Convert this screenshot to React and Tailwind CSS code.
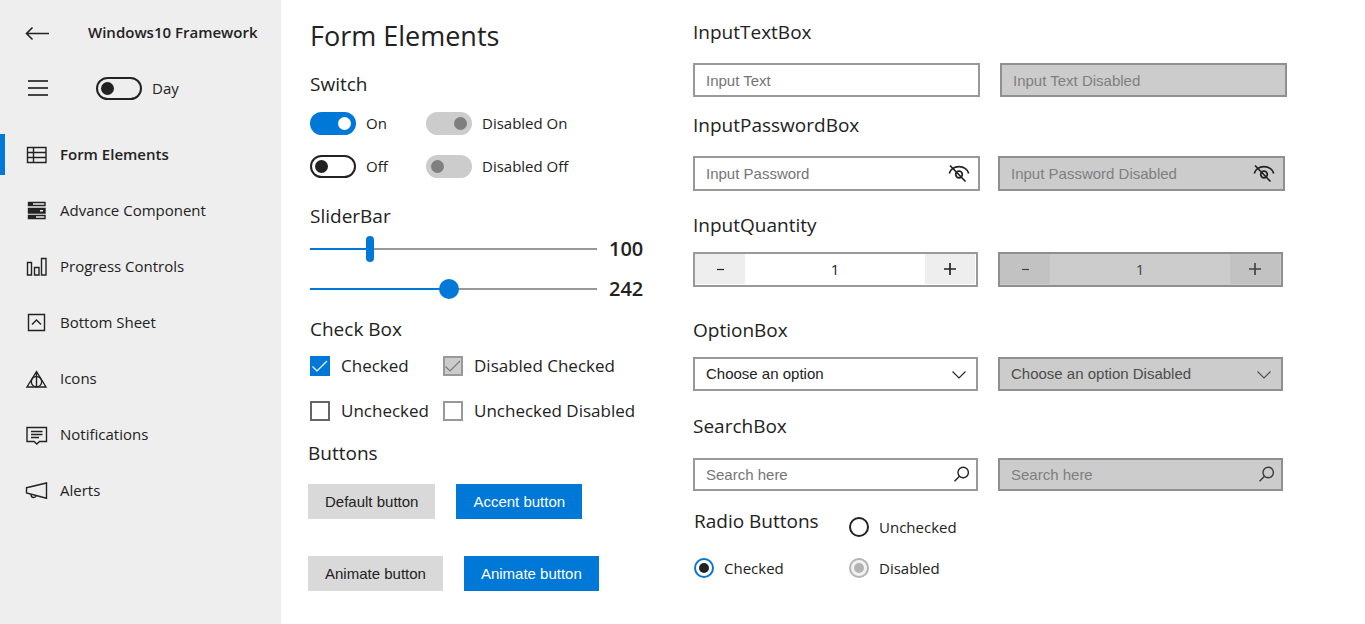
import { useState } from "react";

const NAV = [
  { label: "Form Elements", icon: "form", active: true },
  { label: "Advance Component", icon: "advance" },
  { label: "Progress Controls", icon: "progress" },
  { label: "Bottom Sheet", icon: "sheet" },
  { label: "Icons", icon: "icons" },
  { label: "Notifications", icon: "notifications" },
  { label: "Alerts", icon: "alerts" },
];

const NAV_ICONS = {
  form: (
    <path d="M2.500 5.500h18.500v15H2.500zM2.500 10.500h18.500M2.500 15.500h18.500M8.500 5.500v15" />
  ),
  advance: (
    <>
      <path d="M3.500 4.500h16.500v3H3.500zM3.500 10.500h16.500v4.500H3.500zM3.500 17.500h16.500v3H3.500z" />
      <path d="M3 4h5v4H3zM3 10h17v5H3zM3 17h8v4H3z" fill="currentColor" stroke="none" />
      <path d="M15 12h3v1.500h-3z" fill="#eeeeee" stroke="none" />
    </>
  ),
  progress: <path d="M2.500 8.500h4v12.500h-4zM9.500 13.500h4.500v7.500H9.500zM16.500 4.500h4.500v16.500h-4.500z" />,
  sheet: <path d="M3.500 4.500h16v16h-16zM7 14.500l4.500-4.500 4.500 4.500" />,
  icons: (
    <>
      <path d="M11.500 5.500L21 21H2zM11.500 5.500V21" />
      <circle cx="11.500" cy="15.700" r="5.200" />
    </>
  ),
  notifications: (
    <path d="M2 5.500h19.500v14h-7l-2.700 2.500-2.700-2.500H2zM6 9.500h11.500M6 12.500h11.500M6 15.500h8" />
  ),
  alerts: (
    <path d="M1.500 9.700L21.500 5v15.300L1.500 15zM6 16.500c0 2 1 3 2.500 3s2.500-.7 2.700-1.800" />
  ),
};

function NavIcon({ name }) {
  return (
    <svg viewBox="0 0 24 25" className="h-[25px] w-6 shrink-0" fill="none" stroke="currentColor" strokeWidth="1.400" aria-hidden="true">
      {NAV_ICONS[name]}
    </svg>
  );
}

function Heading({ children, className = "" }) {
  return <h2 className={`h-7 text-[19px] leading-7 ${className}`}>{children}</h2>;
}

function Switch({ label, checked, disabled }) {
  return (
    <label className="flex h-6 items-center gap-2.5 text-[15px] leading-6">
      <input
        type="checkbox"
        role="switch"
        defaultChecked={checked}
        disabled={disabled}
        className="flex h-[23px] w-[46px] shrink-0 appearance-none items-center rounded-full border-2 border-[#222] before:ml-[3px] before:size-[13px] before:rounded-full before:bg-[#222] checked:border-[#0078d7] checked:bg-[#0078d7] checked:before:ml-[26px] checked:before:bg-white disabled:border-[#ccc] disabled:bg-[#ccc] disabled:before:bg-[#7f7f7f]"
      />
      {label}
    </label>
  );
}

function Slider({ label, initial, thumb }) {
  const [value, setValue] = useState(initial);
  const pct = value / 5;
  return (
    <div className="flex h-7 items-center gap-3">
      <input
        type="range"
        min="0"
        max="500"
        value={value}
        aria-label={label}
        onChange={(e) => setValue(Number(e.target.value))}
        className={`h-7 w-[287px] min-w-0 appearance-none bg-[length:100%_2px] bg-center bg-no-repeat [&::-webkit-slider-thumb]:appearance-none [&::-webkit-slider-thumb]:bg-[#0078d7] ${thumb}`}
        style={{ backgroundImage: `linear-gradient(to right, #0078d7 ${pct}%, #999 ${pct}%)` }}
      />
      <output className="text-[20px] leading-7 font-semibold">{value}</output>
    </div>
  );
}

function Check({ label, checked, disabled }) {
  return (
    <label className="flex h-6 items-center gap-[11px] text-[17px] leading-6 whitespace-nowrap">
      <span className="grid size-5 shrink-0">
        <input
          type="checkbox"
          defaultChecked={checked}
          disabled={disabled}
          className="peer col-start-1 row-start-1 size-5 appearance-none border-2 border-[#666] checked:border-[#0078d7] checked:bg-[#0078d7] disabled:border-[#999] disabled:checked:bg-[#ccc]"
        />
        <svg
          viewBox="0 0 20 20"
          className="pointer-events-none invisible col-start-1 row-start-1 size-5 text-white peer-checked:visible peer-disabled:text-[#7a7a7a]"
          fill="none"
          stroke="currentColor"
          strokeWidth="1.200"
          aria-hidden="true"
        >
          <path d="M2.500 10.500l4.500 4.500L17 5" />
        </svg>
      </span>
      {label}
    </label>
  );
}

function Button({ children, accent }) {
  return (
    <button
      type="button"
      className={`h-[35px] px-[17px] pt-px font-[Liberation_Sans,Arial,sans-serif] text-[15px] ${accent ? "bg-[#0078d7] text-white" : "bg-[#d9d9d9] text-[#222]"}`}
    >
      {children}
    </button>
  );
}

const FIELD =
  "col-start-1 row-start-1 w-full min-w-0 appearance-none rounded-none border-2 border-[#999] bg-white px-[11px] font-[Liberation_Sans,Arial,sans-serif] text-[15px] placeholder:text-[#757575] placeholder:opacity-100 disabled:border-[#8f8f8f] disabled:bg-[#ccc] disabled:text-[#4c4c4c] disabled:opacity-100 disabled:placeholder:text-[#7f7f7f]";

function Password({ placeholder, disabled }) {
  const [shown, setShown] = useState(false);
  return (
    <div className="grid items-center">
      <input type={shown ? "text" : "password"} aria-label={placeholder} placeholder={placeholder} disabled={disabled} className={`${FIELD} h-[35px]`} />
      <button
        type="button"
        aria-label="Show password"
        disabled={disabled}
        onClick={() => setShown(!shown)}
        className="col-start-1 row-start-1 mr-[9px] justify-self-end"
      >
        <svg viewBox="0 0 24 20" className="h-5 w-6" fill="none" stroke="#222" strokeWidth="1.700" aria-hidden="true">
          <path d="M2.300 9.500C3 5.500 7 2.700 12 2.700s9 2.800 9.700 6.800" />
          <circle cx="12" cy="10.500" r="3.300" />
          <path d="M3 1.500L18.500 17.500" />
        </svg>
      </button>
    </div>
  );
}

function Quantity({ label, disabled }) {
  const [value, setValue] = useState(1);
  const tone = disabled ? "border-[#8f8f8f] bg-[#ccc] text-[#444]" : "border-[#999] bg-white";
  const side = disabled ? "bg-[#c2c2c2]" : "bg-[#eee]";
  return (
    <div className={`flex h-[35px] border-2 pr-px pb-px ${tone}`}>
      <button type="button" aria-label="Decrease" disabled={disabled} onClick={() => setValue(value - 1)} className={`flex w-[50px] items-center justify-center ${side}`}>
        <svg viewBox="0 0 12 12" className="size-3" fill="none" stroke="currentColor" strokeWidth="1.200" aria-hidden="true">
          <path d="M3 6.500h7" />
        </svg>
      </button>
      <input
        type="text"
        aria-label={label}
        value={value}
        disabled={disabled}
        onChange={(e) => setValue(Number(e.target.value) || 0)}
        className="min-w-0 flex-1 text-center text-[15px]"
      />
      <button type="button" aria-label="Increase" disabled={disabled} onClick={() => setValue(value + 1)} className={`flex w-[50px] items-center justify-center ${side}`}>
        <svg viewBox="0 0 12 12" className="size-3" fill="none" stroke="currentColor" strokeWidth="1.700" aria-hidden="true">
          <path d="M0 6h12M6 0v12" />
        </svg>
      </button>
    </div>
  );
}

function Option({ label, disabled }) {
  return (
    <div className="grid items-center">
      <select aria-label={label} disabled={disabled} className={`${FIELD} h-[34px] pt-px`}>
        <option>{label}</option>
      </select>
      <svg
        viewBox="0 0 16 10"
        className={`pointer-events-none col-start-1 row-start-1 mt-0.5 mr-[11px] h-2.5 w-4 justify-self-end ${disabled ? "text-[#4c4c4c]" : "text-[#222]"}`}
        fill="none"
        stroke="currentColor"
        strokeWidth="1.100"
        aria-hidden="true"
      >
        <path d="M1.500 1.500L8 8l6.500-6.500" />
      </svg>
    </div>
  );
}

function Search({ label, disabled }) {
  return (
    <div className="grid items-center">
      <input type="search" aria-label={label} placeholder="Search here" disabled={disabled} className={`${FIELD} h-[33px]`} />
      <button
        type="button"
        aria-label="Search"
        disabled={disabled}
        className={`col-start-1 row-start-1 mr-2 justify-self-end ${disabled ? "text-[#3c3c3c]" : "text-[#222]"}`}
      >
        <svg viewBox="0 0 16 18" className="h-[18px] w-4" fill="none" stroke="currentColor" strokeWidth="1.400" aria-hidden="true">
          <circle cx="9.200" cy="6.500" r="5.200" />
          <path d="M5.500 10.200L.500 15.200" />
        </svg>
      </button>
    </div>
  );
}

function Radio({ label, name, checked, disabled }) {
  return (
    <label className="flex h-6 items-center gap-2.5 text-[15px] leading-6">
      <input
        type="radio"
        name={name}
        defaultChecked={checked}
        disabled={disabled}
        className="grid size-5 shrink-0 appearance-none place-items-center rounded-full border-2 border-[#222] bg-white before:size-[10px] before:rounded-full checked:border-[#0078d7] checked:before:bg-[#222] disabled:border-[#b3b3b3] disabled:bg-[#f2f2f2] disabled:before:bg-[#b3b3b3]"
      />
      {label}
    </label>
  );
}

export default function App() {
  return (
    <div className="flex min-h-screen bg-white font-[Open_Sans,Noto_Sans,sans-serif] text-[#222]">
      <aside className="w-[281px] shrink-0 bg-[#eee]">
        <div className="mt-5 flex h-6 items-center pl-[25px]">
          <button type="button" aria-label="Back">
            <svg viewBox="0 0 24 24" className="size-6" fill="none" stroke="currentColor" strokeWidth="1.600" aria-hidden="true">
              <path d="M1.500 13.500H24M7.500 7.500l-6 6 6 6" />
            </svg>
          </button>
          <h1 className="ml-[39px] text-[15px] leading-6 font-semibold whitespace-nowrap">Windows10 Framework</h1>
        </div>
        <div className="mt-8 flex h-6 items-center pl-7">
          <button type="button" aria-label="Menu">
            <svg viewBox="0 0 20 16" className="h-4 w-5" fill="none" stroke="#444" strokeWidth="1.800" aria-hidden="true">
              <path d="M0 1h20M0 8h20M0 15h20" />
            </svg>
          </button>
          <div className="ml-12">
            <Switch label="Day" />
          </div>
        </div>
        <nav className="mt-[34px] flex flex-col gap-[15px]">
          {NAV.map((item) => (
            <a
              key={item.label}
              href="#"
              aria-current={item.active ? "page" : undefined}
              className={`flex h-[41px] items-center gap-[11px] border-l-[5px] pl-5 text-[15px] ${item.active ? "border-[#0078d7] font-semibold" : "border-transparent"}`}
            >
              <NavIcon name={item.icon} />
              {item.label}
            </a>
          ))}
        </nav>
      </aside>

      <main className="flex min-w-0 flex-1 items-start pl-[29px]">
        <section className="w-[383px] shrink-0">
          <h1 className="mt-4 h-10 text-[27px] leading-10">Form Elements</h1>

          <Heading className="mt-3.5">Switch</Heading>
          <div className="mt-[13px] grid grid-cols-[116px_1fr] gap-y-[19px]">
            <Switch label="On" checked />
            <Switch label="Disabled On" checked disabled />
            <Switch label="Off" />
            <Switch label="Disabled Off" disabled />
          </div>

          <Heading className="mt-6">SliderBar</Heading>
          <div className="mt-[5px] flex flex-col gap-3">
            <Slider label="Bar slider" initial={100} thumb="[&::-webkit-slider-thumb]:h-[26px] [&::-webkit-slider-thumb]:w-2 [&::-webkit-slider-thumb]:rounded-[4px]" />
            <Slider label="Round slider" initial={242} thumb="[&::-webkit-slider-thumb]:size-5 [&::-webkit-slider-thumb]:rounded-full" />
          </div>

          <Heading className="mt-3">Check Box</Heading>
          <div className="mt-[11px] grid grid-cols-[133px_1fr] gap-y-[21px]">
            <Check label="Checked" checked />
            <Check label="Disabled Checked" checked disabled />
            <Check label="Unchecked" />
            <Check label="Unchecked Disabled" disabled />
          </div>

          <div className="-ml-0.5">
            <Heading className="mt-4">Buttons</Heading>
            <div className="mt-[17px] flex gap-[21px]">
              <Button>Default button</Button>
              <Button accent>Accent button</Button>
            </div>
            <div className="mt-[37px] flex gap-[21px]">
              <Button>Animate button</Button>
              <Button accent>Animate button</Button>
            </div>
          </div>
        </section>

        <section className="min-w-0 flex-1 pr-4">
          <Heading className="mt-[18px]">InputTextBox</Heading>
          <div className="mt-[17px] grid max-w-[594px] grid-cols-2 gap-5">
            <input type="text" aria-label="Input Text" placeholder="Input Text" className={`${FIELD} h-[34px]`} />
            <div>
              <input type="text" aria-label="Input Text Disabled" placeholder="Input Text Disabled" disabled className={`${FIELD} h-[34px]`} />
            </div>
          </div>

          <Heading className="mt-3.5">InputPasswordBox</Heading>
          <div className="mt-[17px] grid max-w-[592px] grid-cols-2 gap-[18px]">
            <Password placeholder="Input Password" />
            <Password placeholder="Input Password Disabled" disabled />
          </div>

          <Heading className="mt-5">InputQuantity</Heading>
          <div className="mt-[13px] grid max-w-[590px] grid-cols-2 gap-5">
            <Quantity label="Quantity" />
            <Quantity label="Quantity disabled" disabled />
          </div>

          <Heading className="mt-[29px]">OptionBox</Heading>
          <div className="mt-[13px] grid max-w-[590px] grid-cols-2 gap-5">
            <Option label="Choose an option" />
            <Option label="Choose an option Disabled" disabled />
          </div>

          <Heading className="mt-[21px]">SearchBox</Heading>
          <div className="mt-[18px] grid max-w-[590px] grid-cols-2 gap-5">
            <Search label="Search" />
            <Search label="Search disabled" disabled />
          </div>

          <div className="mt-4 grid grid-cols-[155px_1fr] gap-y-[17px] pl-px">
            <Heading>Radio Buttons</Heading>
            <div className="flex items-end pt-2">
              <Radio label="Unchecked" name="choice" />
            </div>
            <Radio label="Checked" name="choice" checked />
            <Radio label="Disabled" name="choice-disabled" disabled />
          </div>
        </section>
      </main>
    </div>
  );
}
